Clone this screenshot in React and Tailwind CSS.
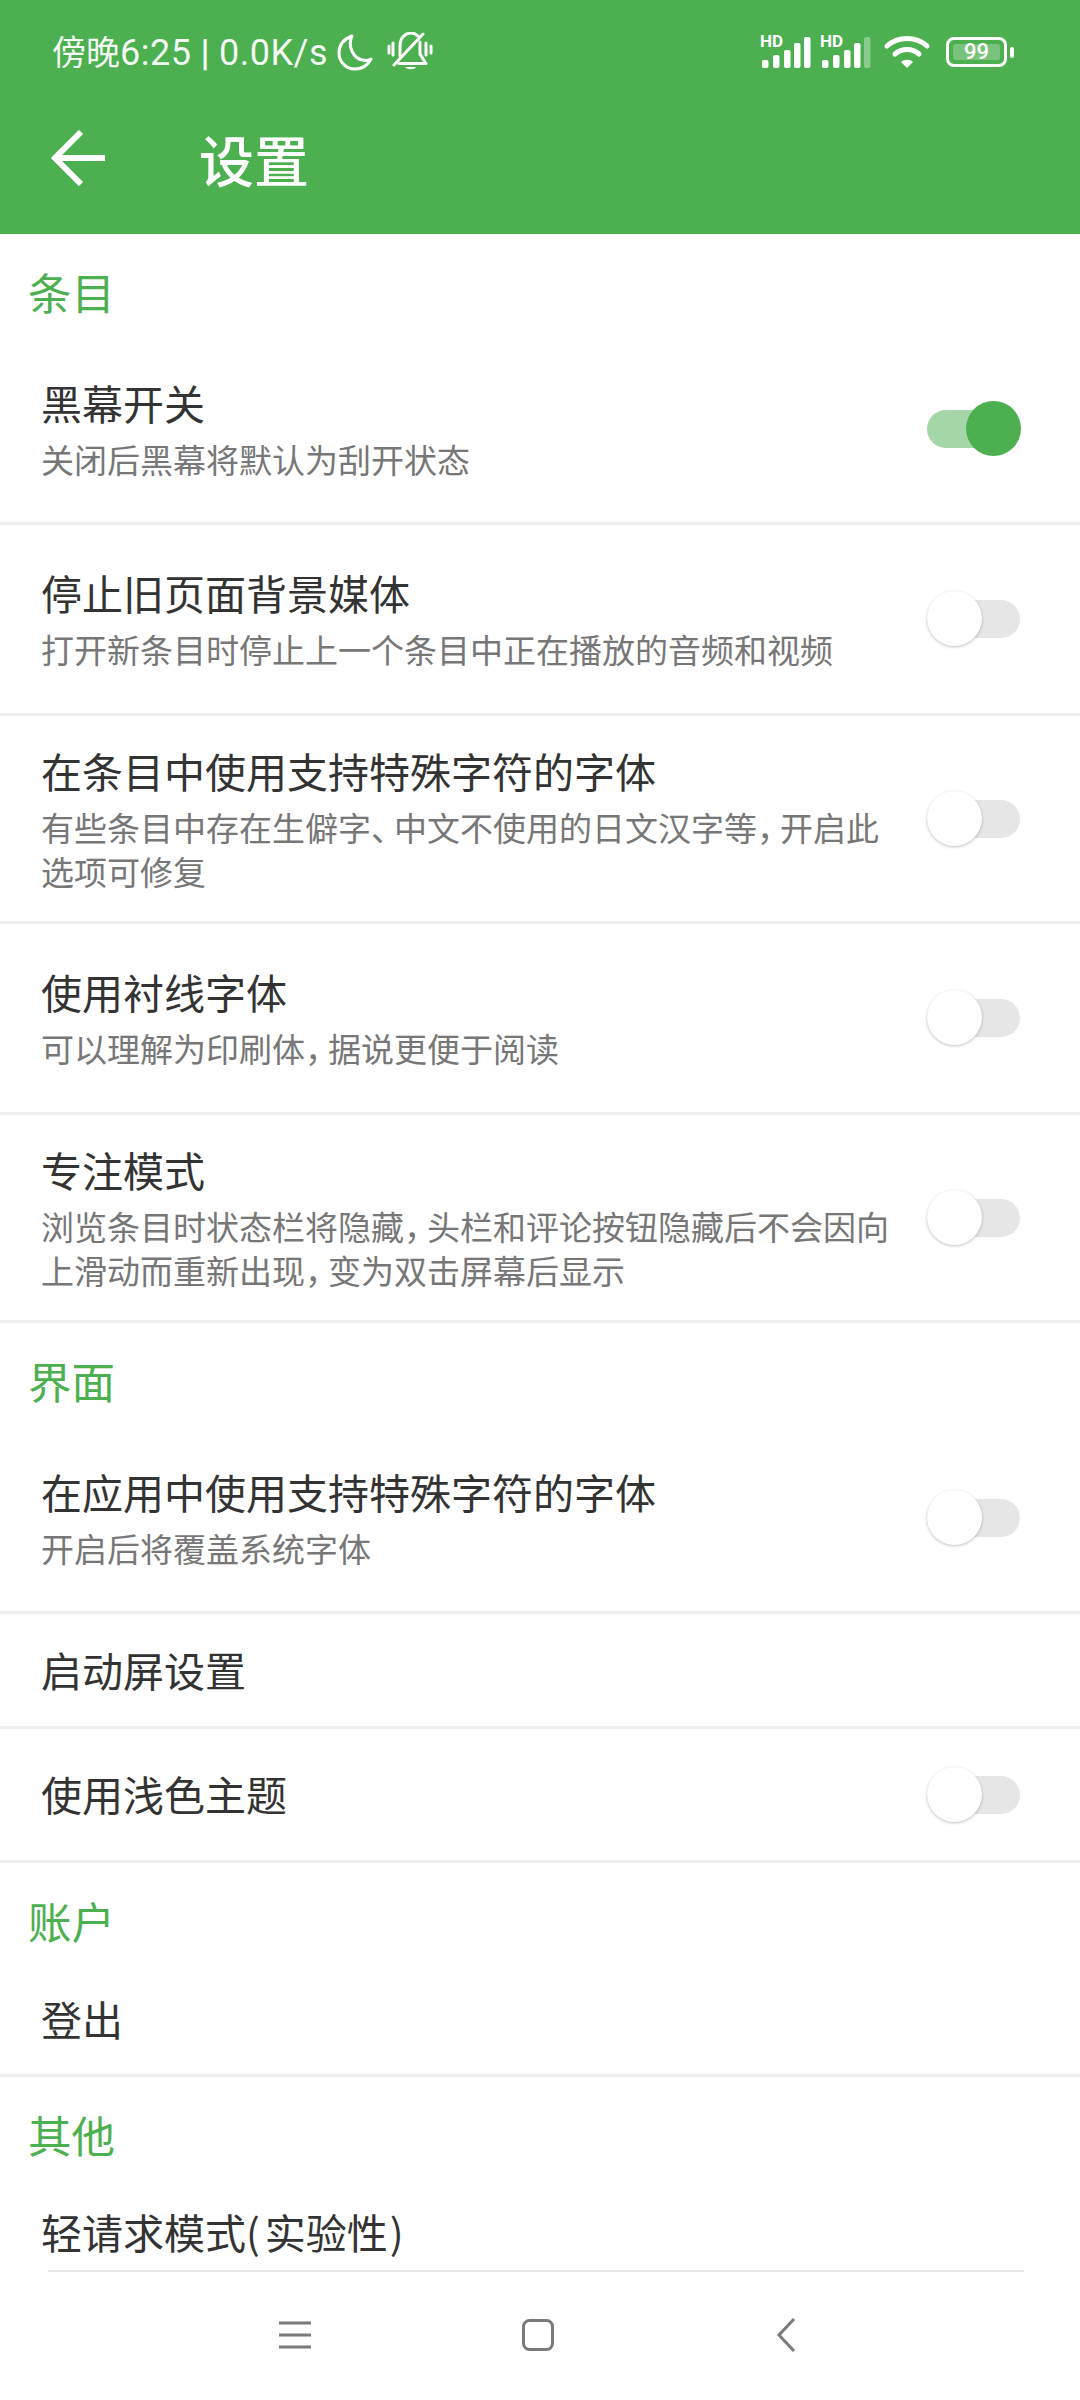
const CJK = { fontFamily: '"Noto Sans CJK SC", "Noto Sans", sans-serif' };
const LATIN = { fontFamily: 'Roboto, "Noto Sans", sans-serif' };

function Switch({ on }) {
  return (
    <div className="relative w-[93px] h-[38px] shrink-0">
      <div className={on ? "w-full h-full rounded-full bg-[#a5d6a7]" : "w-full h-full rounded-full bg-[#e6e6e6]"} />
      {on ? (
        <div className="absolute top-[-9px] right-[-1px] w-[55px] h-[55px] rounded-full bg-[#4caf50]" />
      ) : (
        <div className="absolute top-[-9px] left-0 w-[55px] h-[55px] rounded-full bg-white shadow-[0_1px_3px_rgba(0,0,0,0.25)]" />
      )}
    </div>
  );
}

function Section({ children }) {
  return (
    <div className="h-[101px] pt-[36px] pl-[28px] text-[43.5px] leading-[44px] text-[#4caf50]">{children}</div>
  );
}

function Row({ title, lines = [], sw, on, h }) {
  return (
    <div className={`${h} flex items-center justify-between pl-[41px] pr-[60px] border-b-[3px] border-[#eeeeee]`}>
      <div className="flex flex-col mb-[3px]">
        <div className="text-[41px] leading-[56px] text-[#333333] whitespace-nowrap">{title}</div>
        {lines.length > 0 && (
          <div className="mt-[7px] text-[33px] leading-[44px] text-[#777777]">
            {lines.map((l, i) => (
              <div key={i} className="whitespace-nowrap">{l}</div>
            ))}
          </div>
        )}
      </div>
      {sw && <Switch on={on} />}
    </div>
  );
}

const Comma = ({ c = "，" }) => <span className="tracking-[-10px]">{c}</span>;

function Signal({ dim }) {
  const xs = [1, 12, 23, 33, 43];
  const hs = [8, 13, 18, 25, 31];
  return (
    <div className="relative w-[50px] h-[32px]">
      <span className="absolute left-[-1px] top-[-2px] text-[17px] leading-[14px] font-bold text-white" style={LATIN}>HD</span>
      <svg width="50" height="32" viewBox="0 0 50 32" className="block">
        {xs.map((x, i) => (
          <rect key={i} x={x} y={32 - hs[i]} width="6.5" height={hs[i]} rx="2"
            fill="white" fillOpacity={dim && i === 4 ? 0.35 : 1} />
        ))}
      </svg>
    </div>
  );
}

export default function App() {
  return (
    <div className="w-[1080px] h-[2400px] bg-white flex flex-col overflow-hidden" style={CJK}>
      <header className="h-[234px] bg-[#4caf50] shrink-0 flex flex-col">
        <div className="h-[104px] flex items-center justify-between pl-[52px] pr-[73px] text-white/95">
          <div className="flex items-center">
            <span className="text-[34px] leading-[40px] whitespace-nowrap">傍晚<span className="text-[36px] tracking-[0.5px]" style={LATIN}>6:25<span className="font-bold mx-[9px]">|</span>0.0K/s</span></span>
            <svg width="36" height="38" viewBox="0 0 36 38" fill="none" stroke="white" strokeWidth="3" className="ml-[9px]">
              <path d="M15 3C7 6 2 12 2 20c0 9 7 16 16 16 7 0 13-4 16-10-2 1-5 2-8 1C17 26 10 14 15 3Z" strokeLinejoin="round" />
            </svg>
            <svg width="46" height="40" viewBox="14 8 46 40" fill="none" stroke="white" strokeWidth="3" strokeLinecap="round" className="ml-[14px]">
              <path d="M27 32V22c0-8 5-13 11-13 3 0 5 1 7 3" />
              <path d="M47 18v12l5 8" />
              <path d="M26 39.5h27" />
              <path d="M50 10 21 41" />
              <path d="M32 43h11c-1 3-9 3-11 0Z" fill="white" stroke="none" />
              <path d="M20 19v12M16 22v7M53 19v12M58 22v7" />
            </svg>
          </div>
          <div className="flex items-center">
            <Signal />
            <div className="ml-[10px]"><Signal dim /></div>
            <svg width="46" height="34" viewBox="0 0 46 34" fill="none" stroke="white" strokeWidth="5" strokeLinecap="round" className="ml-[13px]">
              <path d="M3 11c11-10 29-10 40 0" />
              <path d="M11 19c7-6 17-6 24 0" />
              <path d="M23 33l-6-6c3-3 9-3 12 0Z" fill="white" stroke="none" />
            </svg>
            <div className="ml-[16px] relative w-[61px] h-[30px] rounded-[8px] border-[3px] border-white flex items-center justify-center p-[4px]">
              <div className="w-full h-full rounded-[3px] bg-white/25 flex items-center justify-center text-[22px] leading-none text-white font-medium" style={LATIN}>99</div>
              <div className="absolute right-[-10px] top-[7px] w-[4px] h-[11px] rounded-[2px] bg-white" />
            </div>
          </div>
        </div>
        <div className="flex items-center h-[78px] pl-[51px] mt-[15px]">
          <svg width="54" height="56" viewBox="0 0 54 56" fill="none" stroke="white" strokeWidth="6" className="shrink-0">
            <path d="M54 28H5" />
            <path d="M30 2 4 28l26 26" />
          </svg>
          <div className="ml-[94px] text-[55px] leading-[70px] font-medium text-white">设置</div>
        </div>
      </header>

      <main className="flex-1 overflow-hidden">
        <Section>条目</Section>
        <Row h="h-[190px]" title="黑幕开关" lines={["关闭后黑幕将默认为刮开状态"]} sw on />
        <Row h="h-[191px]" title="停止旧页面背景媒体" lines={["打开新条目时停止上一个条目中正在播放的音频和视频"]} sw />
        <Row h="h-[208px]" title="在条目中使用支持特殊字符的字体" lines={[<>有些条目中存在生僻字<Comma c="、" />中文不使用的日文汉字等<Comma />开启此</>, "选项可修复"]} sw />
        <Row h="h-[191px]" title="使用衬线字体" lines={[<>可以理解为印刷体<Comma />据说更便于阅读</>]} sw />
        <Row h="h-[208px]" title="专注模式" lines={[<>浏览条目时状态栏将隐藏<Comma />头栏和评论按钮隐藏后不会因向</>, <>上滑动而重新出现<Comma />变为双击屏幕后显示</>]} sw />
        <Section>界面</Section>
        <Row h="h-[190px]" title="在应用中使用支持特殊字符的字体" lines={["开启后将覆盖系统字体"]} sw />
        <Row h="h-[115px]" title="启动屏设置" />
        <Row h="h-[134px]" title="使用浅色主题" sw />
        <Section>账户</Section>
        <Row h="h-[113px]" title="登出" />
        <Section>其他</Section>
        <div className="pl-[41px] pt-[25px] text-[41px] leading-[56px] text-[#333333] whitespace-nowrap">轻请求模式(<span className="ml-[5px] mr-[2px]">实验性</span>)</div>
        <div className="ml-[48px] w-[976px] mt-[11px] h-[2px] bg-[#e8e8e8]" />
      </main>

      <nav className="h-[128px] shrink-0 bg-white flex items-start">
        <svg width="32" height="28" viewBox="0 0 32 28" fill="none" stroke="#7a7a7a" strokeWidth="3" className="ml-[279px] mt-[49px]">
          <path d="M0 2h32M0 14h32M0 26h32" />
        </svg>
        <svg width="32" height="32" viewBox="0 0 32 32" fill="none" stroke="#7a7a7a" strokeWidth="3" className="ml-[211px] mt-[47px]">
          <rect x="1.5" y="1.5" width="29" height="29" rx="6" />
        </svg>
        <svg width="20" height="34" viewBox="0 0 20 34" fill="none" stroke="#7a7a7a" strokeWidth="3" className="ml-[222px] mt-[46px]">
          <path d="M18 1 3 17l15 16" />
        </svg>
      </nav>
    </div>
  );
}
